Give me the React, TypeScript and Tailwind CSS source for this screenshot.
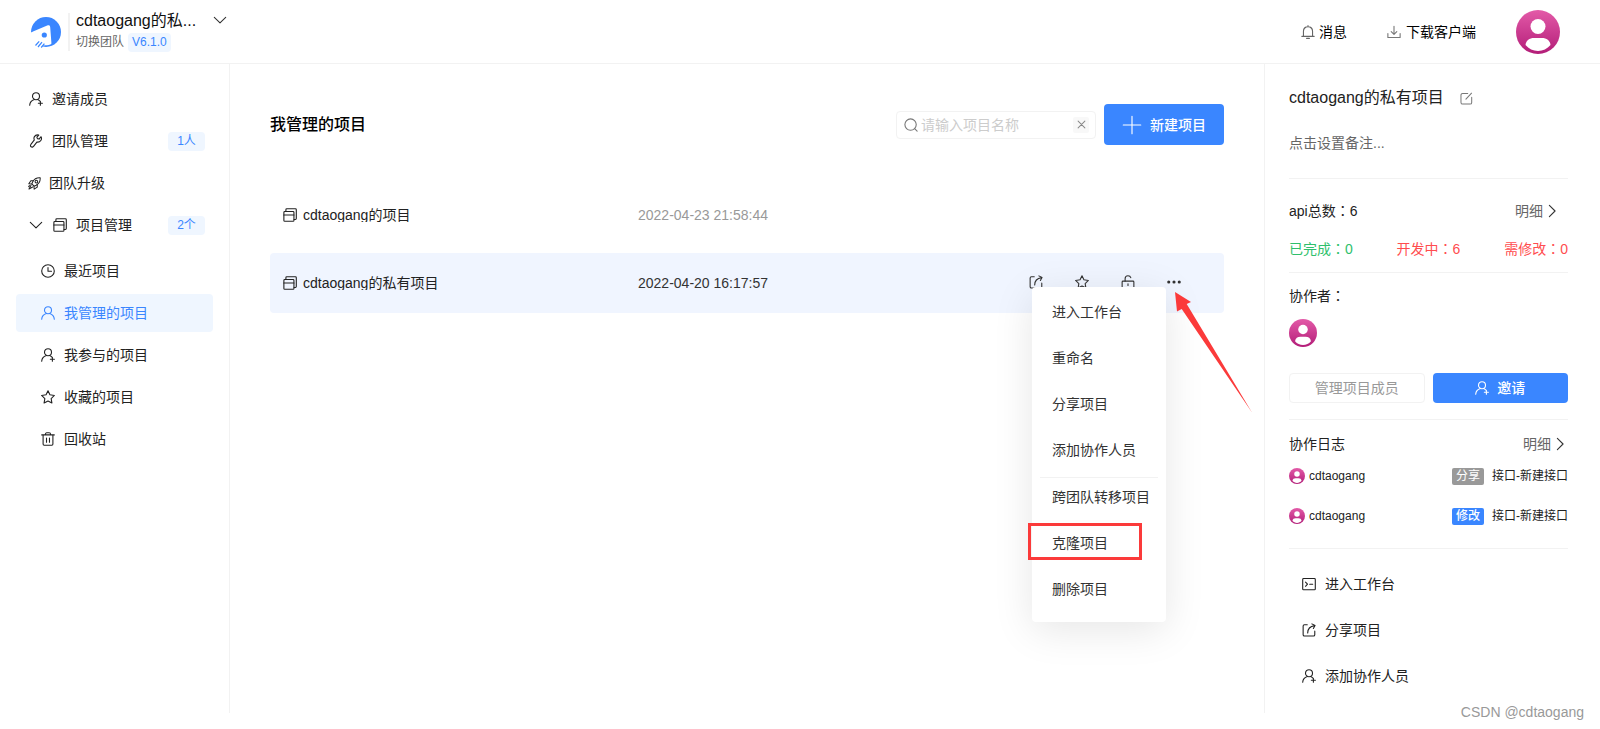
import type { ReactNode } from "react";

type IconProps = { className?: string };

function Icon({ className = "size-4", children }: IconProps & { children: ReactNode }) {
  return (
    <svg
      viewBox="0 0 16 16"
      fill="none"
      stroke="currentColor"
      strokeWidth="1.25"
      strokeLinecap="round"
      strokeLinejoin="round"
      className={`shrink-0 ${className}`}
      aria-hidden="true"
    >
      {children}
    </svg>
  );
}

function UserIcon({ className }: IconProps) {
  return (
    <Icon className={className}>
      <circle cx="8" cy="4.800" r="4" />
      <path d="M.8 15.200c.2-3.600 2.400-5.800 5.400-6.700M15.200 15.200c-.2-3.600-2.400-5.800-5.400-6.700" />
    </Icon>
  );
}

function UserPlusIcon({ className }: IconProps) {
  return (
    <Icon className={className}>
      <circle cx="8" cy="4.800" r="4" />
      <path d="M.8 15.200c.2-3.600 2.400-5.800 5.400-6.700M9.800 8.500c1 .3 1.800.9 2.400 1.700M13 10.500v4.600M10.700 12.800h4.600" />
    </Icon>
  );
}

function WrenchIcon({ className }: IconProps) {
  return (
    <Icon className={className}>
      <path d="M11.200 1.200c-2-.6-4 .2-5 1.800-.7 1.200-.7 2.600-.1 3.800L2.200 11.800a1.900 1.900 0 1 0 3 2.300l3.800-4.900c1.700.3 3.500-.3 4.500-1.800.9-1.300 1-2.900.3-4.300l-2.300 2.700-1.900-.5-.6-1.800z" />
    </Icon>
  );
}

function RocketIcon({ className }: IconProps) {
  return (
    <Icon className={className}>
      <path d="M15 1c-4.200-.3-7.200 1.100-9.200 4.900L4.700 8.500l2.800 2.800 2.600-1.100C13.900 8.200 15.300 5.200 15 1z" />
      <circle cx="10.300" cy="5.700" r="1.600" />
      <path d="M6.300 4.600H3.500L1 8.400l3.700.3M11.400 9.700v2.800L7.600 15l-.3-3.700M3.700 10.300L1.200 14.800l4.500-2.500M.8 11.800l1-1.200" />
    </Icon>
  );
}

function ProjectIcon({ className }: IconProps) {
  return (
    <Icon className={className}>
      <rect x="1" y="4" width="11.500" height="11.200" rx="1" />
      <path d="M1 8h11.500M3.300 3.800V1.900c0-.6.4-1 1-1h9.900c.6 0 1 .4 1 1v10.200c0 .6-.4 1-1 1h-1.500" />
    </Icon>
  );
}

function ClockIcon({ className }: IconProps) {
  return (
    <Icon className={className}>
      <circle cx="8" cy="8" r="7.200" />
      <path d="M8 4v4.300h4" />
    </Icon>
  );
}

function StarIcon({ className }: IconProps) {
  return (
    <Icon className={className}>
      <path d="M8 .8l2.200 4.700 5.100.7-3.700 3.600.9 5.100L8 12.500l-4.500 2.400.9-5.100L.7 6.200l5.100-.7z" />
    </Icon>
  );
}

function TrashIcon({ className }: IconProps) {
  return (
    <Icon className={className}>
      <path d="M.8 3.300h14.400M5 3.100C5 1.500 5.600.9 6.700.9h2.600c1.100 0 1.700.6 1.700 2.200M2.400 3.500v10.300c0 .8.400 1.300 1.200 1.300h8.800c.8 0 1.200-.5 1.200-1.300V3.500M6.300 6.800v5M9.700 6.800v5" />
    </Icon>
  );
}

function ShareIcon({ className }: IconProps) {
  return (
    <Icon className={className}>
      <path d="M6 2H2.800C1.900 2 1.300 2.600 1.300 3.500v9.900c0 .9.600 1.500 1.500 1.500h10.300c.9 0 1.500-.6 1.500-1.500V9.300M6.500 11.300c0-4.300 2.500-7.500 7.900-8.300M11.300 1l3.600 1.800-1.900 3.400" />
    </Icon>
  );
}

function UnlockIcon({ className }: IconProps) {
  return (
    <Icon className={className}>
      <rect x="1.300" y="7" width="13.400" height="8" rx="1" />
      <path d="M4.700 7V4.300C4.700 2.200 6 .9 8 .9c1.600 0 2.800.8 3.200 2.200M8 10v2" />
    </Icon>
  );
}

function DotsIcon({ className }: IconProps) {
  return (
    <Icon className={className}>
      <g fill="currentColor" stroke="none">
        <circle cx="2" cy="8" r="1.800" />
        <circle cx="8" cy="8" r="1.800" />
        <circle cx="14" cy="8" r="1.800" />
      </g>
    </Icon>
  );
}

function BellIcon({ className }: IconProps) {
  return (
    <Icon className={className}>
      <path d="M2.800 12.900V7.200c0-3 2.200-5.200 5.200-5.200s5.200 2.200 5.200 5.200v5.700M1 13h14M8 .7v1.200M6.400 15.300h3.200" />
    </Icon>
  );
}

function DownloadIcon({ className }: IconProps) {
  return (
    <Icon className={className}>
      <path d="M8 1.500v9M4.800 7.500L8 10.700l3.200-3.200M1 9.800v4.400h14V9.800" />
    </Icon>
  );
}

function EditIcon({ className }: IconProps) {
  return (
    <Icon className={className}>
      <path d="M9.500 1.800H3.300c-1.300 0-2.100.8-2.100 2.100v8.900c0 1.300.8 2.100 2.100 2.100h9c1.300 0 2.100-.8 2.100-2.100V6.500M7.300 8.800l6.900-7.300" />
    </Icon>
  );
}

function ConsoleIcon({ className }: IconProps) {
  return (
    <Icon className={className}>
      <rect x=".8" y="1.800" width="14.400" height="12.800" rx="1" />
      <path d="M4 5.800l2.300 2.400L4 10.600M8.800 8.200h3.400" />
    </Icon>
  );
}

function SearchIcon({ className }: IconProps) {
  return (
    <Icon className={className}>
      <circle cx="7.500" cy="7.500" r="6.500" />
      <path d="M12.200 12.200l2.800 2.800" />
    </Icon>
  );
}

function ChevronDown({ className }: IconProps) {
  return (
    <Icon className={className}>
      <path d="M1.500 5L8 11.300 14.500 5" />
    </Icon>
  );
}

function ChevronRight({ className }: IconProps) {
  return (
    <Icon className={className}>
      <path d="M5 1.500L11.500 8 5 14.500" />
    </Icon>
  );
}

function Logo() {
  return (
    <svg viewBox="0 0 30 30" className="size-[30px] shrink-0 overflow-visible" aria-hidden="true">
      <circle cx="15" cy="15" r="15" fill="#3a86ff" />
      <path
        d="M-.5 15.500C1 15 1.500 14.700 2 14.500L16.200 8.600c1.700-.7 2.800-.2 3 1.600l1.200 15.600c.1 1-.2 1.500-1.200 1.800-2 .6-4 .9-6.700.9L9 31-1 27z"
        fill="#fff"
      />
      <circle cx="13.300" cy="18" r="2.600" fill="#3a86ff" />
      <path d="M4.500 28.500l3.700-4.200M7 30l4-4.800M10.200 30.500l3.200-3.800" stroke="#3a86ff" strokeWidth="1.200" />
    </svg>
  );
}

function Avatar({ className }: { className: string }) {
  return (
    <svg viewBox="0 0 44 44" className={`shrink-0 ${className}`} role="img" aria-label="头像">
      <defs>
        <linearGradient id="avatar-bg" x1="0" y1="0" x2="0" y2="1">
          <stop offset="0" stopColor="#e35aa8" />
          <stop offset="1" stopColor="#b31d78" />
        </linearGradient>
      </defs>
      <circle cx="22" cy="22" r="22" fill="url(#avatar-bg)" />
      <circle cx="22" cy="16.500" r="7.500" fill="#fff" />
      <path d="M9.500 35c.5-4.800 4-7 8.500-7h8c4.500 0 8 2.200 8.500 7-3.300 3.900-7.600 6-12.500 6s-9.200-2.100-12.500-6z" fill="#fff" />
    </svg>
  );
}

// full-width colon, centred in its em box
function Colon() {
  return <span className="inline-block font-['Noto_Sans_CJK_TC'] leading-none">：</span>;
}

function Header() {
  return (
    <header className="flex h-16 items-center border-b border-[#f2f2f2] pr-10 pl-[31px]">
      <Logo />
      <div className="ml-[7px] flex h-[38px] items-center gap-3 border-l-2 border-[#f2f2f2] pl-[6px]">
        <div>
          <p className="w-[125px] text-base leading-[18px] whitespace-nowrap text-[#111]">
            cdtaogang的私...
          </p>
          <div className="mt-[3px] flex items-center gap-1 text-xs">
            <a href="#team" className="text-[#666]">切换团队</a>
            <span className="rounded bg-[#eff6ff] px-1 leading-[19px] text-[#3a86ff]">V6.1.0</span>
          </div>
        </div>
        <button type="button" aria-label="展开团队" className="-mt-6 text-[#333]">
          <ChevronDown className="size-[14px]" />
        </button>
      </div>
      <nav className="ml-auto flex items-center text-sm text-black">
        <a href="#messages" className="flex items-center gap-1">
          <BellIcon className="size-[14px] text-[#666]" />
          消息
        </a>
        <a href="#download" className="ml-10 flex items-center gap-[5px]">
          <DownloadIcon className="size-[14px] text-[#777]" />
          下载客户端
        </a>
        <button type="button" className="ml-10">
          <Avatar className="size-11" />
        </button>
      </nav>
    </header>
  );
}

function CountBadge({ children }: { children: ReactNode }) {
  return (
    <span className="ml-auto w-[37px] rounded bg-[#eff6ff] text-center text-xs leading-[19px] text-[#3a86ff]">
      {children}
    </span>
  );
}

const subItems = [
  { label: "最近项目", icon: ClockIcon },
  { label: "我管理的项目", icon: UserIcon, active: true },
  { label: "我参与的项目", icon: UserPlusIcon },
  { label: "收藏的项目", icon: StarIcon },
  { label: "回收站", icon: TrashIcon },
];

function Sidebar() {
  return (
    <aside className="w-[230px] shrink-0 border-r border-[#f2f2f2] px-4 pt-4 text-sm text-[#222]">
      <nav>
        <ul className="flex flex-col gap-1">
          <li>
            <a href="#invite" className="flex h-[38px] items-center gap-2 px-3">
              <UserPlusIcon className="size-4 p-px" />
              邀请成员
            </a>
          </li>
          <li>
            <a href="#team" className="flex h-[38px] items-center gap-2 pr-2 pl-3">
              <WrenchIcon className="size-4 p-px" />
              团队管理
              <CountBadge>1人</CountBadge>
            </a>
          </li>
          <li>
            <a href="#upgrade" className="flex h-[38px] items-center gap-2 px-3">
              <RocketIcon className="size-[13px]" />
              团队升级
            </a>
          </li>
          <li>
            <a href="#projects" className="flex h-[38px] items-center pr-2 pl-[13px]">
              <ChevronDown className="size-[14px]" />
              <ProjectIcon className="mr-2 ml-[9px] size-4 p-px" />
              项目管理
              <CountBadge>2个</CountBadge>
            </a>
            <ul className="mt-2 flex flex-col gap-1">
              {subItems.map(({ label, icon: ItemIcon, active }) => (
                <li key={label}>
                  <a
                    href="#list"
                    className={`flex h-[38px] items-center gap-2 rounded px-6 ${
                      active ? "bg-[#eff6ff] text-[#3a86ff]" : ""
                    }`}
                  >
                    <ItemIcon className="size-4 p-px" />
                    {label}
                  </a>
                </li>
              ))}
            </ul>
          </li>
        </ul>
      </nav>
    </aside>
  );
}

const menuTop = ["进入工作台", "重命名", "分享项目", "添加协作人员"];
const menuBottom = ["跨团队转移项目", "克隆项目", "删除项目"];

function MenuItem({ label, marked = false }: { label: string; marked?: boolean }) {
  return (
    <li className="relative">
      <button type="button" className="flex h-[38px] w-full items-center px-5 whitespace-nowrap">
        {label}
      </button>
      {marked && (
        <span className="absolute -top-px -left-1 h-[37px] w-[114px] border-3 border-[#fb3a3a]" />
      )}
    </li>
  );
}

function ProjectMenu() {
  return (
    <div className="absolute top-3 left-[3px] z-10 w-[134px] rounded bg-white pt-[6px] pb-[14px] text-sm text-[#333] shadow-[0_8px_40px_rgba(0,0,0,0.1)]">
      <ul className="flex flex-col gap-2">
        {menuTop.map((label) => (
          <MenuItem key={label} label={label} />
        ))}
      </ul>
      <hr className="mx-2 mt-2 border-[#f2f2f2]" />
      <ul className="flex flex-col gap-2">
        {menuBottom.map((label) => (
          <MenuItem key={label} label={label} marked={label === "克隆项目"} />
        ))}
      </ul>
    </div>
  );
}

function RowActions() {
  return (
    <div className="relative mb-[2px] flex w-[152px] items-center justify-between text-[#333]">
      <button type="button" aria-label="分享"><ShareIcon className="size-[14px]" /></button>
      <button type="button" aria-label="收藏"><StarIcon className="size-[14px]" /></button>
      <button type="button" aria-label="权限"><UnlockIcon className="size-[14px]" /></button>
      <button type="button" aria-label="更多"><DotsIcon className="size-[14px]" /></button>
      <ProjectMenu />
      <svg
        viewBox="0 0 78 122"
        className="absolute top-[17px] left-[146px] z-20 h-[122px] w-[78px]"
        aria-hidden="true"
      >
        <path d="M0 0L16 10l-4.300 2L77 120.500 6.700 17 2 19.500z" fill="#fb3a3a" />
      </svg>
    </div>
  );
}

const projects = [
  { name: "cdtaogang的项目", time: "2022-04-23 21:58:44" },
  { name: "cdtaogang的私有项目", time: "2022-04-20 16:17:57", active: true },
];

function ProjectList() {
  return (
    <main className="min-w-0 flex-1 px-10 pt-10">
      <div className="flex items-center gap-2">
        <h1 className="mr-auto text-base font-medium text-black">我管理的项目</h1>
        <label className="flex h-7 w-[200px] items-center rounded border border-[#f2f2f2] pr-[6px] pl-[7px]">
          <SearchIcon className="size-[14px] text-[#777]" />
          <input
            type="text"
            aria-label="搜索项目"
            placeholder="请输入项目名称"
            className="ml-[3px] min-w-0 flex-1 text-sm outline-none placeholder:text-[#ccc]"
          />
          <button
            type="button"
            aria-label="清空"
            className="flex size-4 items-center justify-center rounded-xs bg-[#f8f8f8] text-[#888]"
          >
            <Icon className="size-[9px]">
              <path d="M2 2l12 12M14 2L2 14" strokeWidth="1.800" />
            </Icon>
          </button>
        </label>
        <button
          type="button"
          className="flex h-[41px] w-[120px] items-center justify-center gap-2 rounded bg-[#3a86ff] text-sm font-medium text-white"
        >
          <Icon className="size-5">
            <path d="M8 1v14M1 8h14" strokeWidth="0.900" />
          </Icon>
          新建项目
        </button>
      </div>
      <table className="mt-8 w-full table-fixed border-separate border-spacing-x-0 border-spacing-y-2 text-left text-sm">
        <tbody>
          {projects.map((p) => (
            <tr key={p.name} className={p.active ? "bg-[#f0f5ff] text-[#333]" : "text-[#999]"}>
              <td className="h-[60px] w-[368px] rounded-l pl-3">
                <a href="#project" className="flex items-center gap-[5px] text-[#222]">
                  <ProjectIcon className="size-4 p-px" />
                  <span className="truncate leading-[14px]">{p.name}</span>
                </a>
              </td>
              <td>{p.time}</td>
              <td className="w-[195px] rounded-r">{p.active && <RowActions />}</td>
            </tr>
          ))}
        </tbody>
      </table>
    </main>
  );
}

function DetailLink({ className = "" }: IconProps) {
  return (
    <a href="#detail" className={`flex items-center gap-[2px] text-[#666] ${className}`}>
      明细
      <ChevronRight className="size-[14px] text-[#333]" />
    </a>
  );
}

const logs = [
  { action: "分享", tone: "bg-[#999]" },
  { action: "修改", tone: "bg-[#3a86ff] font-medium" },
];

const shortcuts = [
  { label: "进入工作台", icon: ConsoleIcon },
  { label: "分享项目", icon: ShareIcon },
  { label: "添加协作人员", icon: UserPlusIcon },
];

function DetailPanel() {
  return (
    <aside className="w-[336px] shrink-0 border-l border-[#f2f2f2] pt-[22px] pr-8 pl-6 text-sm leading-[22px] text-[#222]">
      <section className="border-b border-[#f2f2f2] pb-6">
        <div className="flex h-6 items-center gap-4">
          <h2 className="text-base">cdtaogang的私有项目</h2>
          <button type="button" aria-label="编辑名称" className="text-[#777]">
            <EditIcon className="size-[13px]" />
          </button>
        </div>
        <p className="mt-[22px] text-[#666]">点击设置备注...</p>
      </section>

      <section className="border-b border-[#f2f2f2] pt-[21px] pb-3">
        <div className="flex h-[22px] items-center justify-between">
          <p>api总数<Colon />6</p>
          <DetailLink className="pr-[9px]" />
        </div>
        <div className="mt-4 flex h-[22px] justify-between text-[#ff4d4f]">
          <p className="text-[#2fbf6c]">已完成<Colon />0</p>
          <p>开发中<Colon />6</p>
          <p>需修改<Colon />0</p>
        </div>
      </section>

      <section className="border-b border-[#f2f2f2] pt-3 pb-4">
        <p className="h-[22px]">协作者<Colon /></p>
        <Avatar className="mt-3 size-7" />
        <div className="mt-[26px] grid grid-cols-2 gap-2">
          <button type="button" className="h-[30px] rounded border border-[#f2f2f2] text-[#999]">
            管理项目成员
          </button>
          <button
            type="button"
            className="flex h-[30px] items-center justify-center gap-2 rounded bg-[#3a86ff] font-medium text-white"
          >
            <UserPlusIcon className="size-[14px]" />
            邀请
          </button>
        </div>
      </section>

      <section className="border-b border-[#f2f2f2] pt-[13px] pb-[22px]">
        <div className="flex items-center justify-between">
          <h3>协作日志</h3>
          <DetailLink className="pr-px" />
        </div>
        <ul className="mt-[11px] flex flex-col gap-5 text-xs">
          {logs.map(({ action, tone }) => (
            <li key={action} className="flex h-5 items-center">
              <Avatar className="mr-1 size-4" />
              cdtaogang
              <span className={`mr-2 ml-auto rounded-xs px-1 leading-[17px] text-white ${tone}`}>
                {action}
              </span>
              接口-新建接口
            </li>
          ))}
        </ul>
      </section>

      <ul className="flex flex-col gap-2 pt-4">
        {shortcuts.map(({ label, icon: ItemIcon }) => (
          <li key={label}>
            <a href="#shortcut" className="flex h-[38px] items-center gap-2 px-3">
              <ItemIcon className="size-4 p-px" />
              {label}
            </a>
          </li>
        ))}
      </ul>
    </aside>
  );
}

export default function App() {
  return (
    <div className="relative min-h-screen bg-white pb-4 font-['Liberation_Sans','Noto_Sans_CJK_SC',sans-serif]">
      <Header />
      <div className="flex min-h-[calc(100vh-80px)]">
        <Sidebar />
        <ProjectList />
        <DetailPanel />
      </div>
      <p className="absolute right-4 bottom-[7px] text-sm text-[#999]">CSDN @cdtaogang</p>
    </div>
  );
}
